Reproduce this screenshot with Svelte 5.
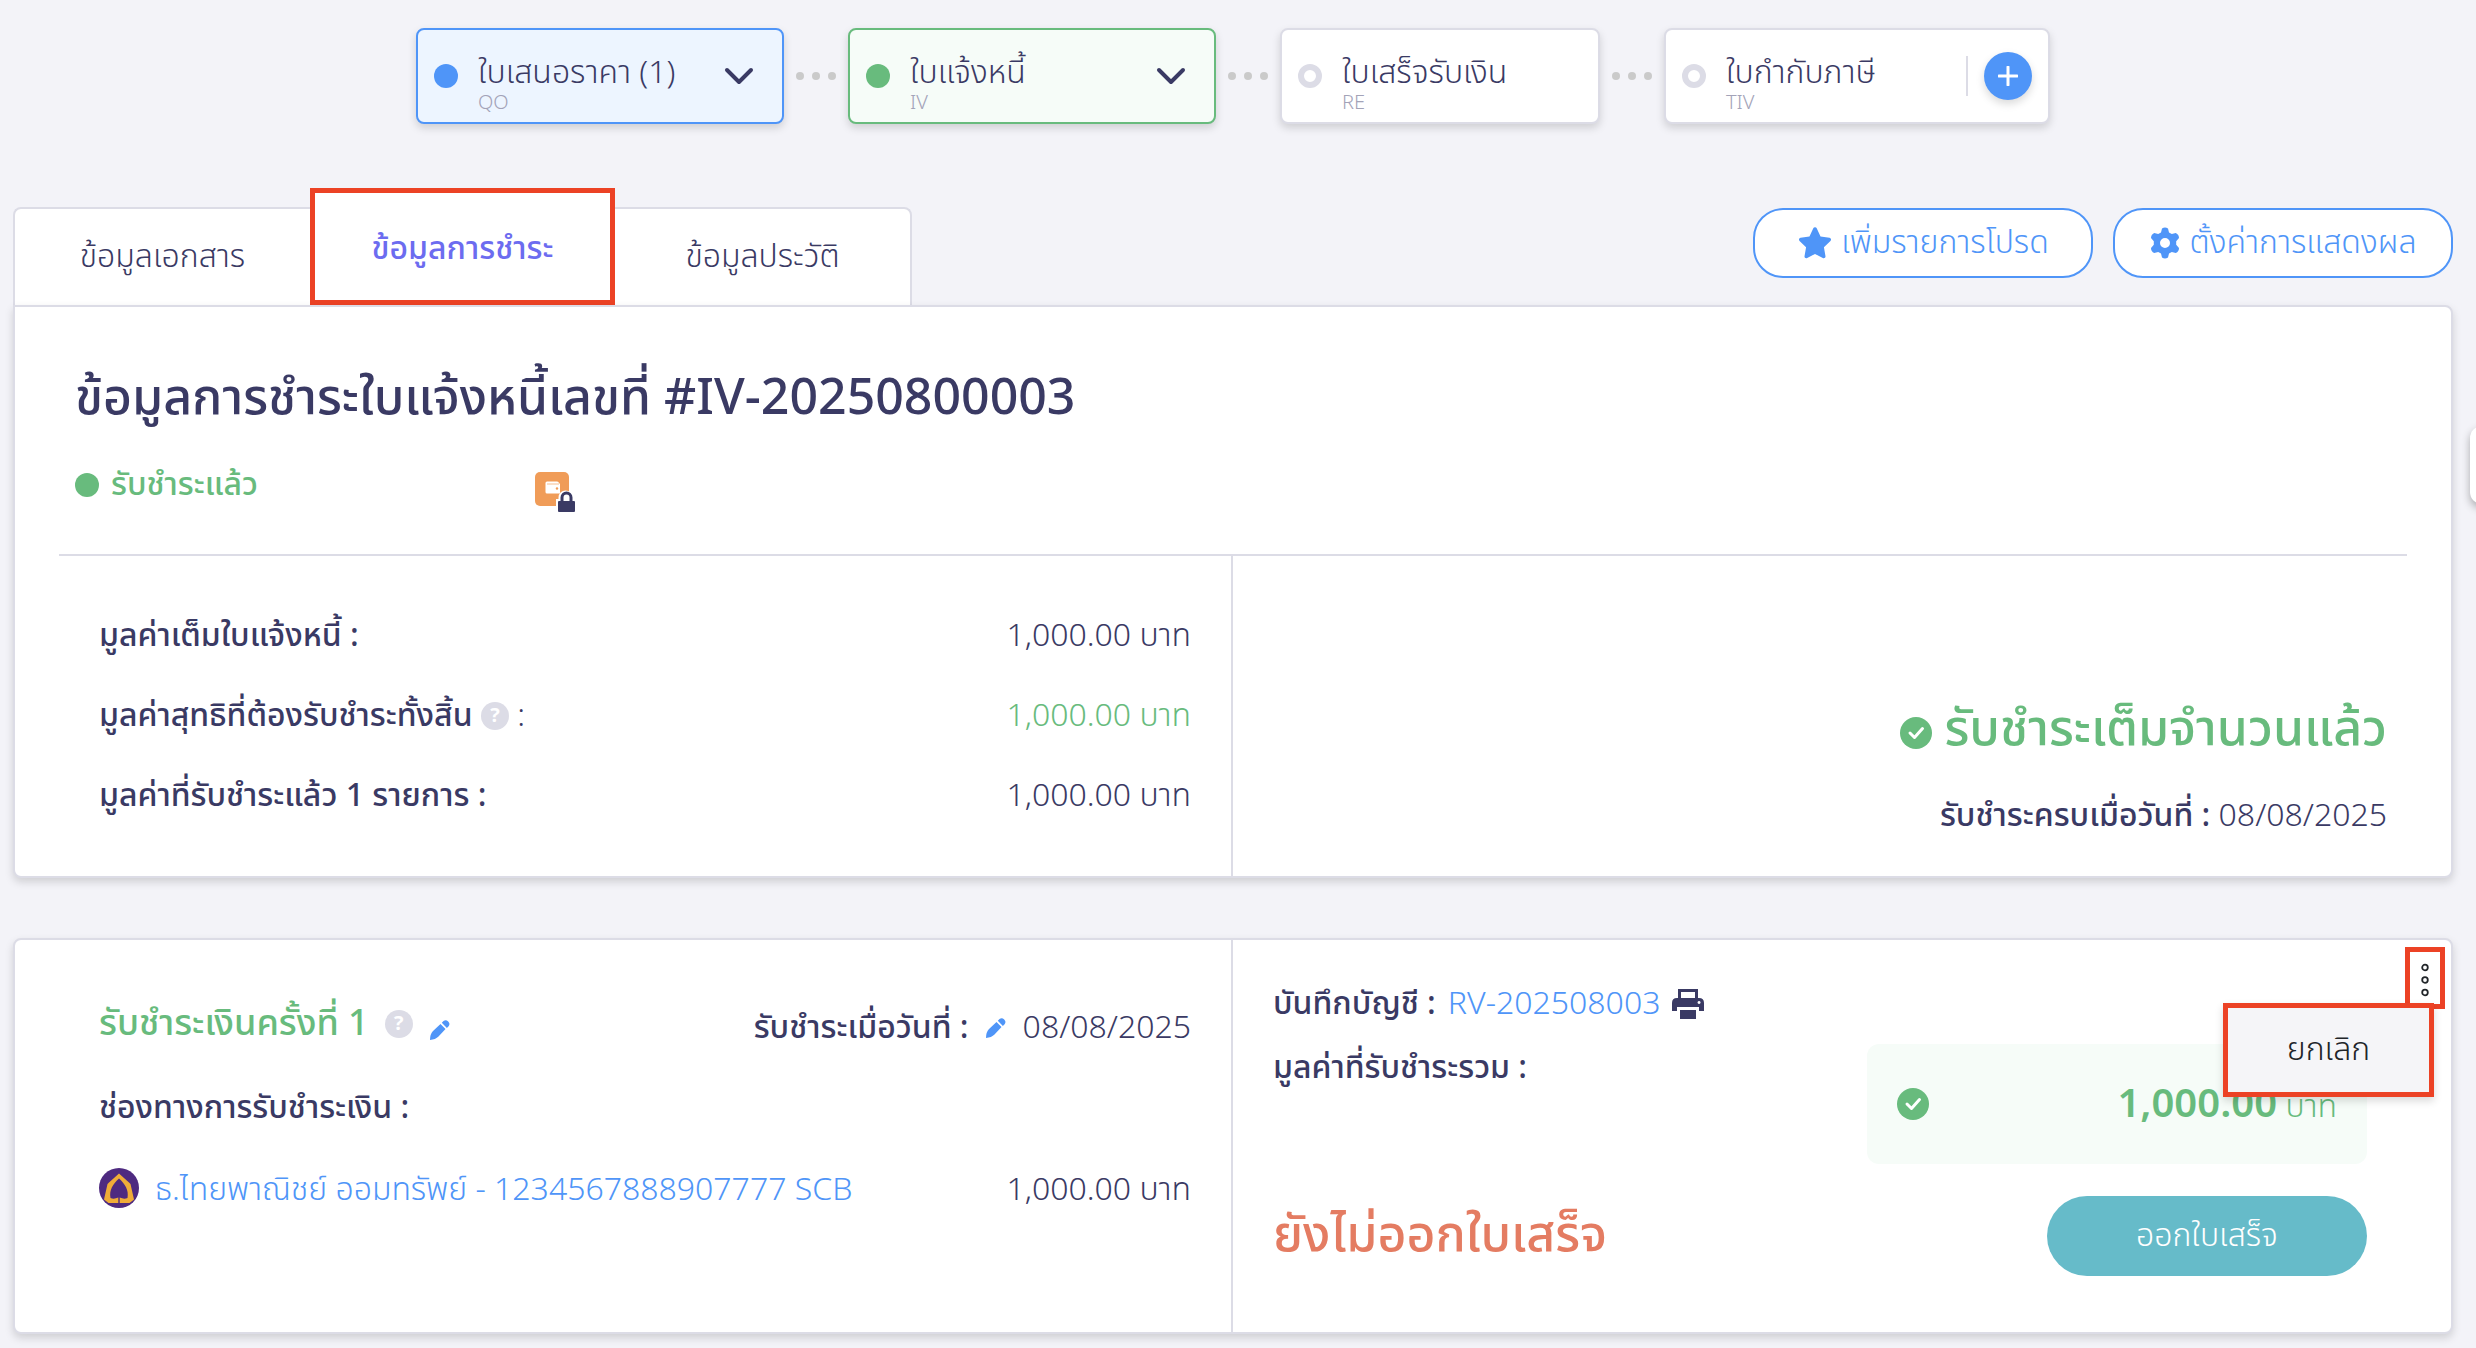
<script>
  const steps = [
    { name: 'ใบเสนอราคา (1)', code: 'QO', state: 'blue', menu: true },
    { name: 'ใบแจ้งหนี้', code: 'IV', state: 'green', menu: true },
    { name: 'ใบเสร็จรับเงิน', code: 'RE', state: 'empty' },
    { name: 'ใบกำกับภาษี', code: 'TIV', state: 'empty', add: true },
  ]

  const tabs = ['ข้อมูลเอกสาร', 'ข้อมูลการชำระ', 'ข้อมูลประวัติ']
  let activeTab = 1

  const summary = [
    { label: 'มูลค่าเต็มใบแจ้งหนี้ :', value: '1,000.00 บาท' },
    { label: 'มูลค่าสุทธิที่ต้องรับชำระทั้งสิ้น', help: true, value: '1,000.00 บาท', green: true },
    { label: 'มูลค่าที่รับชำระแล้ว 1 รายการ :', value: '1,000.00 บาท' },
  ]

  let menuOpen = true
</script>

<main>
  <nav class="steps" aria-label="สถานะเอกสาร">
    {#each steps as step, i}
      {#if i > 0}
        <span class="dots" aria-hidden="true"><i></i><i></i><i></i></span>
      {/if}
      <div class="step {step.state}" class:menu={step.menu} class:add={step.add}>
        <span class="bullet"></span>
        <div class="step-text">
          <span class="step-name">{step.name}</span>
          <span class="step-code">{step.code}</span>
        </div>
        {#if step.menu}
          <button type="button" class="icon-btn" aria-label="เปิดรายการ">
            <svg width="30" height="18" viewBox="0 0 30 18">
              <path d="M3 3l12 12L27 3" fill="none" stroke="#3a3a64" stroke-width="4" stroke-linecap="round" stroke-linejoin="round" />
            </svg>
          </button>
        {/if}
        {#if step.add}
          <span class="separator"></span>
          <button type="button" class="plus" aria-label="เพิ่ม">
            <svg width="20" height="20" viewBox="0 0 20 20">
              <path d="M10 1v18M1 10h18" stroke="#fff" stroke-width="3" stroke-linecap="round" />
            </svg>
          </button>
        {/if}
      </div>
    {/each}
  </nav>

  <div class="toolbar">
    <div class="tabs" role="tablist">
      {#each tabs as tab, i}
        <button
          type="button"
          role="tab"
          class="tab"
          class:active={i === activeTab}
          aria-selected={i === activeTab}
          on:click={() => (activeTab = i)}
        >
          {tab}
        </button>
      {/each}
    </div>

    <div class="actions">
      <button type="button" class="pill">
        <svg width="36" height="34" viewBox="0 0 24 24" fill="currentColor">
          <path d="M12 .8c.6 0 1 .3 1.200.8l2.700 5.800 6.300.9c1.100.2 1.500 1.400.7 2.200l-4.600 4.500 1.100 6.300c.2 1.100-.9 1.800-1.900 1.300L12 19.700l-5.500 2.900c-1 .5-2.100-.2-1.900-1.300l1.100-6.300L1.100 10.500c-.8-.8-.4-2 .7-2.200l6.300-.9 2.700-5.800c.2-.5.6-.8 1.200-.8z" />
        </svg>
        เพิ่มรายการโปรด
      </button>
      <button type="button" class="pill">
        <svg width="32" height="32" viewBox="0 0 32 32" fill="currentColor">
          <path
            fill-rule="evenodd"
            d="M13 1.500Q16-.5 19 1.500L20 5.500L22.800 7.100L26.800 5.900Q30 7.500 30 11L27.200 14.200V17.800L30 21Q30 24.500 26.800 26.100L22.800 24.900L20 26.500L19 30.500Q16 32.500 13 30.500L12 26.500L9.200 24.900L5.200 26.100Q2 24.500 2 21L4.800 17.800V14.200L2 11Q2 7.500 5.200 5.900L9.200 7.100L12 5.500ZM16 11a5 5 0 1 0 0 10a5 5 0 1 0 0-10z"
          />
        </svg>
        ตั้งค่าการแสดงผล
      </button>
    </div>
  </div>

  <section class="card summary-card">
    <h1>ข้อมูลการชำระใบแจ้งหนี้เลขที่ #IV-20250800003</h1>
    <div class="status-row">
      <span class="status"><span class="bullet"></span>รับชำระแล้ว</span>
      <svg class="lock" width="42" height="42" viewBox="0 0 42 42" aria-label="ล็อก">
        <rect x="1" y="1" width="34" height="34" rx="5" fill="#f09c58" />
        <path d="M13 10.500h10q2 0 2 2h1v10H13q-1.500 0-1.500-1.500v-9q0-1.500 1.500-1.500z" fill="#fff" />
        <path d="M13 13h12" stroke="#f6bd8e" stroke-width="1" />
        <circle cx="23" cy="17.500" r="1.200" fill="#f09c58" />
        <path d="M22 28h2.500v-1.500a7 7 0 0 1 14 0V28H42v14H22z" fill="#fff" />
        <rect x="24" y="30" width="17" height="11" rx="1" fill="#3a3a64" />
        <path d="M28 31v-4.500a4.500 4.500 0 0 1 9 0V31" fill="none" stroke="#3a3a64" stroke-width="3" />
      </svg>
    </div>

    <div class="columns ruled">
      <dl class="left">
        {#each summary as row}
          <div class="row">
            <dt>
              {row.label}
              {#if row.help}<span class="help">?</span> <span class="regular">:</span>{/if}
            </dt>
            <dd class:green={row.green}>{row.value}</dd>
          </div>
        {/each}
      </dl>
      <div class="right paid">
        <p class="paid-title">
          <svg width="32" height="32" viewBox="0 0 32 32">
            <circle cx="16" cy="16" r="16" fill="#68bb7d" />
            <path d="M10 16l4.500 4.500 8-9" fill="none" stroke="#fff" stroke-width="3" stroke-linecap="round" stroke-linejoin="round" />
          </svg>
          รับชำระเต็มจำนวนแล้ว
        </p>
        <p class="paid-date"><b>รับชำระครบเมื่อวันที่ :</b> 08/08/2025</p>
      </div>
    </div>
  </section>

  <section class="card payment-card">
    <div class="columns">
      <div class="left">
        <div class="row">
          <h2>
            รับชำระเงินครั้งที่ 1
            <span class="help">?</span>
            <button type="button" class="icon-btn edit" aria-label="แก้ไข">
              <svg width="22" height="22" viewBox="0 0 22 22" fill="#4f95f8">
                <path d="M1 21Q1 15 4 12L11.500 5l5 5L9.500 17.500Q6.500 20.500 1 21zM12.800 3.700l1.700-1.600q2.300-1.900 4.700.4q2.300 2.400.4 4.700l-1.700 1.700z" />
              </svg>
            </button>
          </h2>
          <p class="date">
            <b>รับชำระเมื่อวันที่ :</b>
            <button type="button" class="icon-btn" aria-label="แก้ไขวันที่">
              <svg width="22" height="22" viewBox="0 0 22 22" fill="#4f95f8">
                <path d="M1 21Q1 15 4 12L11.500 5l5 5L9.500 17.500Q6.500 20.500 1 21zM12.800 3.700l1.700-1.600q2.300-1.900 4.700.4q2.300 2.400.4 4.700l-1.700 1.700z" />
              </svg>
            </button>
            08/08/2025
          </p>
        </div>
        <p class="channel"><b>ช่องทางการรับชำระเงิน :</b></p>
        <div class="row">
          <a class="bank" href="#bank">
            <svg width="40" height="40" viewBox="0 0 40 40">
              <circle cx="20" cy="20" r="20" fill="#4e2a80" />
              <path d="M20 5.500L10 14.500L8.500 16L5 31.500L9.500 35H19.300V29.500Q15 31.500 11.500 30C10 22 14 16 20 10.500C26 16 30 22 28.500 30Q25 31.500 20.700 29.500V35H30.500L35 31.500L31.500 16L30 14.500z" fill="#f0ac38" />
            </svg>
            ธ.ไทยพาณิชย์ ออมทรัพย์ - 1234567888907777 SCB
          </a>
          <span>1,000.00 บาท</span>
        </div>
      </div>

      <div class="right record">
        <p class="journal">
          <b>บันทึกบัญชี :</b>
          <a href="#rv">RV-202508003</a>
          <button type="button" class="icon-btn" aria-label="พิมพ์">
            <svg width="32" height="30" viewBox="0 0 32 30" fill="#3a3a64">
              <path fill-rule="evenodd" d="M6 0h20v9h1q5 0 5 5v8h-5v-4H5v4H0v-8q0-5 5-5h1zM9 3v6h14V3zM27 12a1.500 1.500 0 1 0 .1 0z" />
              <rect x="8" y="21" width="16" height="9" />
            </svg>
          </button>
        </p>
        <p class="total-label"><b>มูลค่าที่รับชำระรวม :</b></p>
        <div class="total">
          <svg width="32" height="32" viewBox="0 0 32 32">
            <circle cx="16" cy="16" r="16" fill="#68bb7d" />
            <path d="M10 16l4.500 4.500 8-9" fill="none" stroke="#fff" stroke-width="3" stroke-linecap="round" stroke-linejoin="round" />
          </svg>
          <span><strong>1,000.00</strong> บาท</span>
        </div>
        <div class="receipt">
          <span class="no-receipt">ยังไม่ออกใบเสร็จ</span>
          <button type="button" class="issue">ออกใบเสร็จ</button>
        </div>
      </div>
    </div>

    <button type="button" class="kebab" aria-label="ตัวเลือก" aria-expanded={menuOpen} on:click={() => (menuOpen = !menuOpen)}>
      <svg width="8" height="34" viewBox="0 0 8 34" fill="none" stroke="#212529" stroke-width="1.8">
        <circle cx="4" cy="4.500" r="2.800" />
        <circle cx="4" cy="17" r="2.800" />
        <circle cx="4" cy="29.500" r="2.800" />
      </svg>
    </button>
    {#if menuOpen}
      <div class="dropdown" role="menu">
        <button type="button" role="menuitem">ยกเลิก</button>
      </div>
    {/if}
  </section>

  <aside class="drawer-handle" aria-hidden="true"></aside>
</main>

<style>
  :global(body) {
    background: #f3f3f8;
  }

  main {
    position: relative;
    padding: 28px 23px 14px 13px;
    overflow: hidden;
    font-family: 'Noto Sans Thai', 'Noto Sans', sans-serif;
    font-size: 32px;
    font-weight: 300;
    line-height: 40px;
    color: #3a3a64;
  }

  button {
    font: inherit;
    color: inherit;
    cursor: pointer;
  }

  h1,
  h2,
  p,
  dl,
  dd {
    margin: 0;
  }

  b,
  dt {
    font-weight: 500;
  }

  a {
    color: #4f95f8;
    text-decoration: none;
  }

  .icon-btn {
    display: inline-flex;
    padding: 0;
    border: none;
    background: none;
  }

  .green {
    color: #68bb7d;
  }

  .steps {
    display: flex;
    justify-content: center;
  }

  .step {
    display: flex;
    align-items: center;
    box-sizing: border-box;
    width: 320px;
    height: 96px;
    padding: 0 16px;
    gap: 20px;
    border: 2px solid #dcdce6;
    border-radius: 8px;
    background: #fff;
    box-shadow: 0 4px 8px rgba(0, 0, 0, 0.15);
  }

  .step.menu {
    width: 368px;
    padding-right: 28px;
  }

  .step.add {
    width: 386px;
  }

  .step.blue {
    border-color: #4f95f8;
    background: #edf5ff;
  }

  .step.green {
    border-color: #68bb7d;
    background: #f6fcf8;
  }

  .bullet {
    flex: none;
    box-sizing: border-box;
    width: 24px;
    height: 24px;
    border-radius: 50%;
    background: #68bb7d;
  }

  .blue .bullet {
    background: #4f95f8;
  }

  .empty .bullet {
    border: 6px solid #dcdce6;
    background: #fff;
  }

  .step-text {
    display: flex;
    flex: 1;
    flex-direction: column;
    padding-top: 18px;
    white-space: nowrap;
  }

  .step-name {
    line-height: 36px;
    color: #3a3a64;
  }

  .step-code {
    font-size: 20px;
    line-height: 24px;
    color: #a3a3b8;
  }

  .separator {
    width: 2px;
    height: 40px;
    margin-right: -4px;
    background: #dcdce6;
  }

  .plus {
    display: flex;
    align-items: center;
    justify-content: center;
    width: 48px;
    height: 48px;
    padding: 0;
    border: none;
    border-radius: 50%;
    background: #4f95f8;
    box-shadow: 0 4px 8px rgba(0, 0, 0, 0.15);
  }

  .dots {
    display: flex;
    align-items: center;
    justify-content: center;
    gap: 8px;
    width: 64px;
  }

  .dots i {
    width: 8px;
    height: 8px;
    border-radius: 50%;
    background: #cacaca;
  }

  .toolbar {
    display: flex;
    align-items: flex-end;
    justify-content: space-between;
    margin-top: 64px;
  }

  .tabs {
    display: flex;
    align-items: flex-end;
  }

  .tab {
    box-sizing: border-box;
    width: 297px;
    height: 98px;
    padding: 0;
    border: 2px solid #dcdce6;
    border-width: 2px 0 0;
    background: #fff;
  }

  .tab:first-child {
    border-left-width: 2px;
    border-top-left-radius: 8px;
  }

  .tab:last-child {
    border-right-width: 2px;
    border-top-right-radius: 8px;
  }

  .tab.active {
    width: 305px;
    height: 117px;
    padding-top: 4px;
    border: 5px solid #ec4225;
    color: #6c6cf0;
    font-weight: 500;
  }

  .actions {
    display: flex;
    gap: 20px;
    margin-bottom: 27px;
  }

  .pill {
    display: flex;
    align-items: center;
    justify-content: center;
    gap: 8px;
    box-sizing: border-box;
    width: 340px;
    height: 70px;
    padding: 0;
    border: 2px solid #4f95f8;
    border-radius: 30px;
    background: #fff;
    color: #4f95f8;
    white-space: nowrap;
  }

  .card {
    position: relative;
    border: 2px solid #dcdce6;
    border-radius: 8px;
    background: #fff;
    box-shadow: 0 4px 8px rgba(0, 0, 0, 0.15);
  }

  .summary-card {
    border-top-left-radius: 0;
  }

  h1,
  .paid-title,
  .no-receipt {
    font-size: 50px;
    font-weight: 500;
    line-height: 64px;
  }

  h1 {
    padding: 60px 60px 0;
  }

  .status-row {
    display: flex;
    align-items: flex-start;
    gap: 276px;
    margin: 34px 60px 41px;
  }

  .status {
    display: flex;
    align-items: center;
    gap: 12px;
    color: #68bb7d;
    font-weight: 500;
  }

  .lock {
    margin-top: 6px;
  }

  .columns {
    display: grid;
    grid-template-columns: 1fr 1fr;
  }

  .columns.ruled {
    margin: 0 44px;
    border-top: 2px solid #dcdce6;
  }

  .left {
    padding: 40px 40px 40px 84px;
    border-right: 2px solid #dcdce6;
  }

  .ruled .left {
    padding-left: 40px;
  }

  .row {
    display: flex;
    align-items: center;
    justify-content: space-between;
    white-space: nowrap;
  }

  .ruled .row {
    height: 80px;
  }

  .regular {
    font-weight: 300;
  }

  .help {
    display: inline-flex;
    align-items: center;
    justify-content: center;
    width: 28px;
    height: 28px;
    border-radius: 50%;
    background: #dcdce6;
    color: #fff;
    font-size: 20px;
    font-weight: 700;
    line-height: 28px;
    vertical-align: 4px;
  }

  .paid {
    display: flex;
    flex-direction: column;
    align-items: flex-end;
    justify-content: flex-end;
    padding: 0 20px 40px;
  }

  .paid-title {
    display: flex;
    align-items: center;
    gap: 12px;
    margin-bottom: 34px;
    color: #68bb7d;
  }

  .paid-title svg {
    margin-top: 6px;
  }

  .payment-card {
    margin-top: 60px;
  }

  .payment-card .left {
    padding-top: 60px;
  }

  h2 {
    display: flex;
    align-items: center;
    gap: 16px;
    color: #68bb7d;
    font-size: 36px;
    font-weight: 500;
  }

  .edit {
    padding-top: 12px;
  }

  .date,
  .journal {
    display: flex;
    align-items: center;
    gap: 16px;
  }

  .date {
    padding-top: 8px;
  }

  .channel {
    margin: 40px 0;
  }

  .bank {
    display: flex;
    align-items: center;
    gap: 16px;
  }

  .bank svg {
    margin-bottom: 4px;
  }

  .record {
    display: flex;
    flex-direction: column;
    padding: 44px 84px 56px 40px;
  }

  .journal {
    gap: 12px;
  }

  .total-label {
    margin-top: 24px;
  }

  .total {
    display: flex;
    align-items: center;
    justify-content: space-between;
    align-self: flex-end;
    box-sizing: border-box;
    width: 500px;
    height: 120px;
    margin-top: -44px;
    padding: 0 30px;
    border-radius: 12px;
    background: #f6fcf8;
    color: #68bb7d;
  }

  .total span {
    padding-top: 4px;
  }

  .total strong {
    font-size: 40px;
    font-weight: 600;
  }

  .receipt {
    display: flex;
    align-items: center;
    justify-content: space-between;
    margin-top: 32px;
  }

  .no-receipt {
    color: #e47c62;
  }

  .issue {
    width: 320px;
    height: 80px;
    border: none;
    border-radius: 40px;
    background: #66bbc9;
    color: #fff;
  }

  .kebab {
    position: absolute;
    top: 7px;
    right: 6px;
    display: flex;
    align-items: center;
    justify-content: center;
    box-sizing: border-box;
    width: 40px;
    height: 62px;
    padding: 4px 0 0;
    border: 5px solid #ec4225;
    background: #fff;
  }

  .dropdown {
    position: absolute;
    top: 63px;
    right: 17px;
    box-sizing: border-box;
    width: 211px;
    height: 94px;
    border: 5px solid #ec4225;
    background: #f5f5f8;
    box-shadow: 0 4px 8px rgba(0, 0, 0, 0.15);
  }

  .dropdown button {
    width: 100%;
    height: 100%;
    padding: 0;
    border: none;
    background: none;
    color: #212529;
  }

  /* edge of the side drawer, mostly outside the window */
  .drawer-handle {
    position: absolute;
    top: 426px;
    right: -54px;
    width: 60px;
    height: 78px;
    border-radius: 12px;
    background: #fff;
    box-shadow: 0 4px 8px rgba(0, 0, 0, 0.3);
  }
</style>
